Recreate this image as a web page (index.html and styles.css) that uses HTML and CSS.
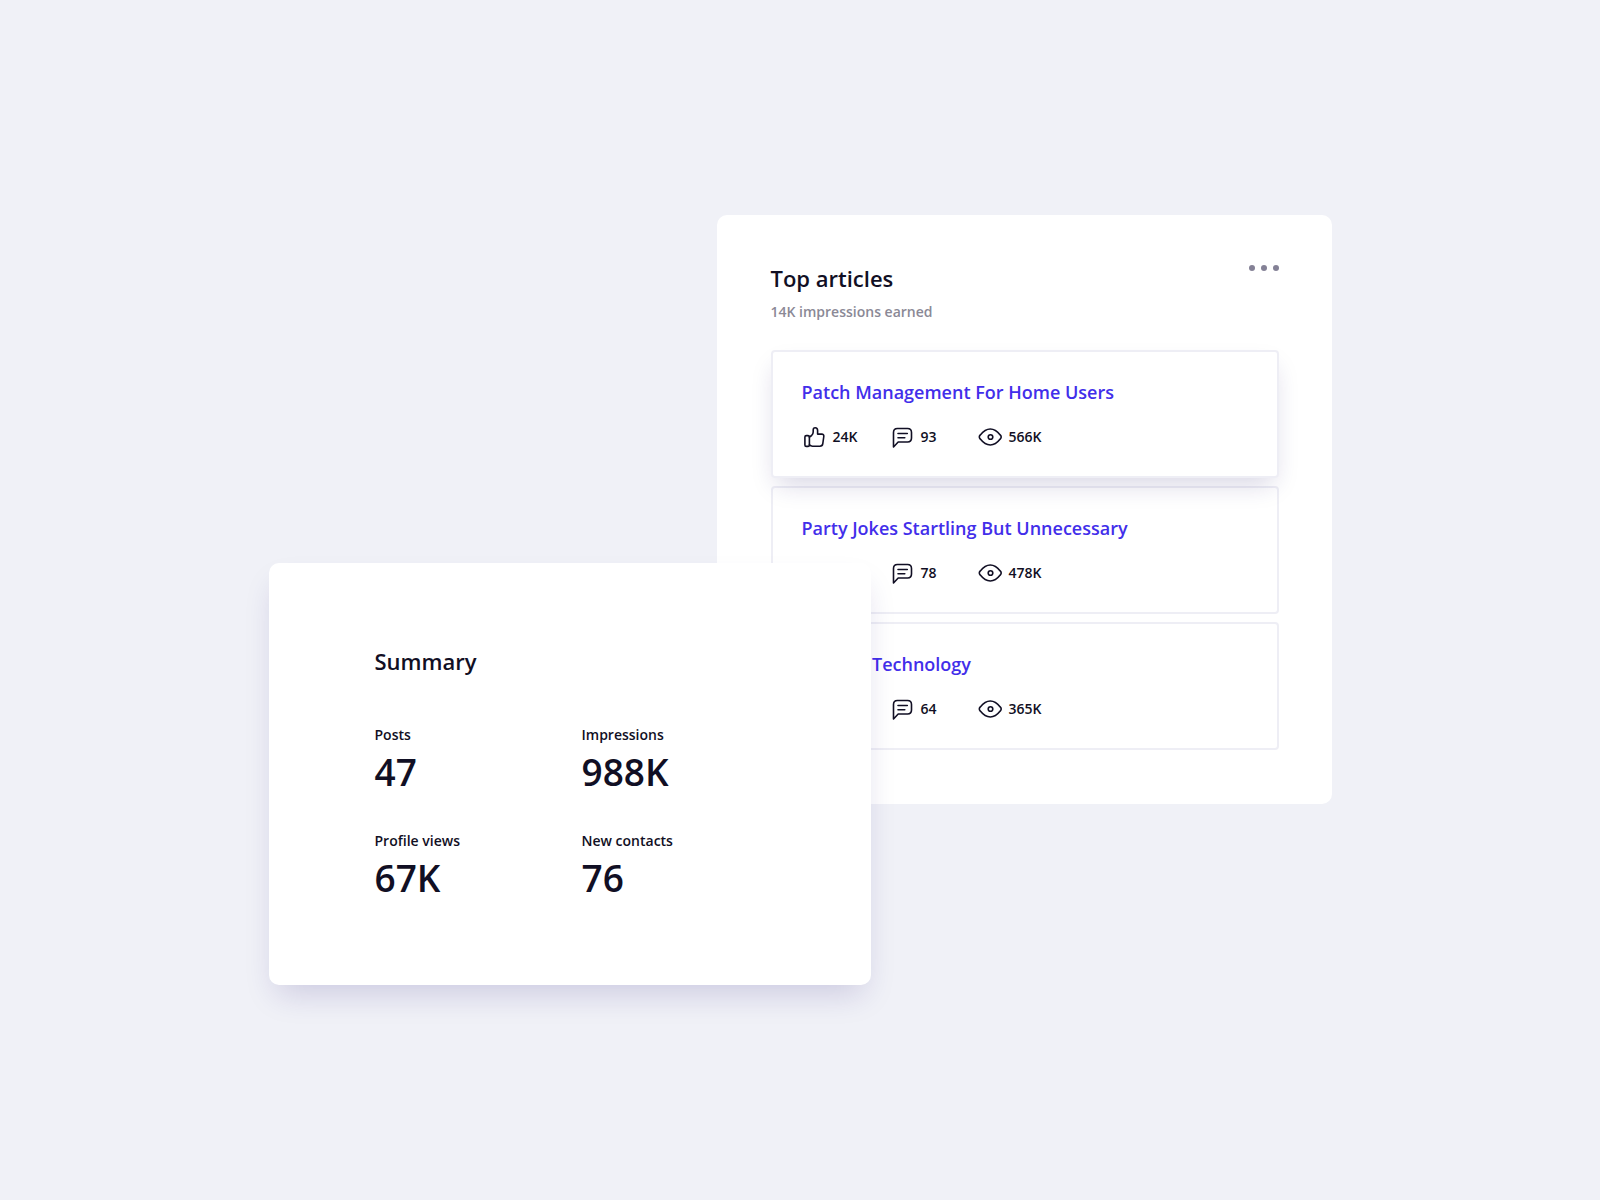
FILE: index.html
```html
<!DOCTYPE html>
<html lang="en">
<head>
    <meta charset="UTF-8">
    <meta name="viewport" content="width=device-width, initial-scale=1.0">
    <title>Top articles</title>
    <link rel="stylesheet" href="styles.css">
</head>
<body>

    <!-- Shared icons -->
    <svg class="icon-defs" aria-hidden="true">
        <symbol id="icon-like" viewBox="0 0 24 24">
            <path d="M4.300 10.600h1.700q1.400 0 1.400 1.300v8q0 1.500-1.400 1.500H4.300q-1.400 0-1.400-1.400v-8q0-1.400 1.400-1.400z"/>
            <path d="M7.400 12.200l2.200-1.700q1.600-1.500 1.600-3.500V5q0-2.200 2-2.200 2.400 0 2.400 2.700v3.600h4.100q2.400 0 2.100 2.400l-1 7.200q-.3 2.500-2.900 2.500h-7.400q-1.900 0-3.100-1.400"/>
        </symbol>
        <symbol id="icon-comment" viewBox="0 0 24 24">
            <path d="M3.500 22V7.400q0-3.900 3.900-3.900h10.200q3.900 0 3.900 3.900v5.700q0 3.900-3.900 3.900H8.200z"/>
            <path d="M8 8.500h9.300M8 12.800h6.800"/>
        </symbol>
        <symbol id="icon-eye" viewBox="0 0 24 24">
            <path d="M1.300 12q0-1 1-2.100Q7 4 12.300 4t9.900 5.900q1 1.100 1 2.100t-1 2.100Q17.600 20 12.300 20T2.300 14.100q-1-1.100-1-2.100z"/>
            <circle cx="12.500" cy="12" r="2.300"/>
        </symbol>
    </svg>

    <main class="container">
        <!-- Articles card -->
        <section class="card articles">
            <header class="articles-header">
                <div>
                    <h2>Top articles</h2>
                    <p class="subtitle">14K impressions earned</p>
                </div>
                <button type="button" class="btn-more" aria-label="More options">
                    <span></span><span></span><span></span>
                </button>
            </header>

            <div class="article-list">
                <article class="article active">
                    <h3><a href="#">Patch Management For Home Users</a></h3>
                    <ul class="stats">
                        <li><svg class="icon"><use href="#icon-like"/></svg>24K</li>
                        <li><svg class="icon"><use href="#icon-comment"/></svg>93</li>
                        <li><svg class="icon"><use href="#icon-eye"/></svg>566K</li>
                    </ul>
                </article>
                <article class="article">
                    <h3><a href="#">Party Jokes Startling But Unnecessary</a></h3>
                    <ul class="stats">
                        <li><svg class="icon"><use href="#icon-like"/></svg>21K</li>
                        <li><svg class="icon"><use href="#icon-comment"/></svg>78</li>
                        <li><svg class="icon"><use href="#icon-eye"/></svg>478K</li>
                    </ul>
                </article>
                <article class="article">
                    <h3><a href="#">Kitchen Technology</a></h3>
                    <ul class="stats">
                        <li><svg class="icon"><use href="#icon-like"/></svg>18K</li>
                        <li><svg class="icon"><use href="#icon-comment"/></svg>64</li>
                        <li><svg class="icon"><use href="#icon-eye"/></svg>365K</li>
                    </ul>
                </article>
            </div>
        </section>

        <!-- Summary card -->
        <section class="card summary">
            <h2>Summary</h2>
            <dl class="summary-grid">
                <div>
                    <dt>Posts</dt>
                    <dd>47</dd>
                </div>
                <div>
                    <dt>Impressions</dt>
                    <dd>988K</dd>
                </div>
                <div>
                    <dt>Profile views</dt>
                    <dd>67K</dd>
                </div>
                <div>
                    <dt>New contacts</dt>
                    <dd>76</dd>
                </div>
            </dl>
        </section>
    </main>

</body>
</html>
```
FILE: styles.css
```css
* {
    box-sizing: border-box;
}
body {
    font-family: "Open Sans", "Noto Sans", sans-serif;
    font-weight: 600;
    margin: 0;
    min-height: 100vh;
    display: grid;
    align-items: center;
    justify-items: center;
    color: #110f24;
    background-color: #f0f1f7;
}
h2, h3, p, ul, dl, dd {
    margin: 0;
    padding: 0;
}
h2 {
    font-size: 22px;
    line-height: 26px;
    font-weight: 600;
}
.icon-defs {
    display: none;
}
/* The cards share the middle column so they overlap */
.container {
    display: grid;
    grid-template-columns: 448fr 154fr 461fr;
    width: 90%;
    max-width: 1063px;
}
.card {
    grid-row: 1;
    align-self: start;
    background-color: #fff;
    border-radius: 10px;
}
.articles {
    grid-column: 2 / 4;
    padding: 50px 53px 54px 54px;
}
.articles-header {
    display: flex;
    justify-content: space-between;
    align-items: flex-start;
    margin-bottom: 28px;
}
.subtitle {
    margin-top: 11px;
    font-size: 14px;
    line-height: 20px;
    color: #8b8996;
}
.btn-more {
    display: flex;
    gap: 6px;
    padding: 0;
    border: none;
    background: none;
    cursor: pointer;
}
.btn-more span {
    width: 6px;
    height: 6px;
    border-radius: 50%;
    background-color: #848196;
}
.article-list {
    display: grid;
    gap: 8px;
}
.article {
    padding: 28px 29px 27px;
    border: 2px solid #eeeef5;
    border-radius: 4px;
    background-color: #fff;
}
.article.active {
    position: relative;
    z-index: 1;
    box-shadow: 0 12px 24px -6px rgba(32, 24, 108, 0.18);
}
.article h3 {
    margin-bottom: 21px;
    font-size: 18px;
    line-height: 24px;
    font-weight: 600;
}
.article a {
    color: #422eea;
    text-decoration: none;
}
.article a:hover {
    text-decoration: underline;
}
.stats {
    display: grid;
    grid-template-columns: repeat(3, 88px);
    list-style: none;
    font-size: 14px;
    line-height: 24px;
}
.stats li {
    display: flex;
    align-items: center;
    gap: 7px;
}
.icon {
    width: 24px;
    height: 24px;
    fill: none;
    stroke: #110f24;
    stroke-width: 1.6;
    stroke-linecap: round;
    stroke-linejoin: round;
}
.summary {
    grid-column: 1 / 3;
    z-index: 2;
    margin-top: 348px;
    padding: 85px 82px 85px 106px;
    box-shadow: 0 16px 32px -8px rgba(40, 24, 120, 0.18);
}
.summary-grid {
    display: grid;
    grid-template-columns: 1fr 1fr;
    gap: 37px 0;
    margin-top: 51px;
}
.summary dt {
    margin-bottom: 5px;
    font-size: 14px;
    line-height: 20px;
}
.summary dd {
    font-size: 37px;
    line-height: 44px;
}
```
